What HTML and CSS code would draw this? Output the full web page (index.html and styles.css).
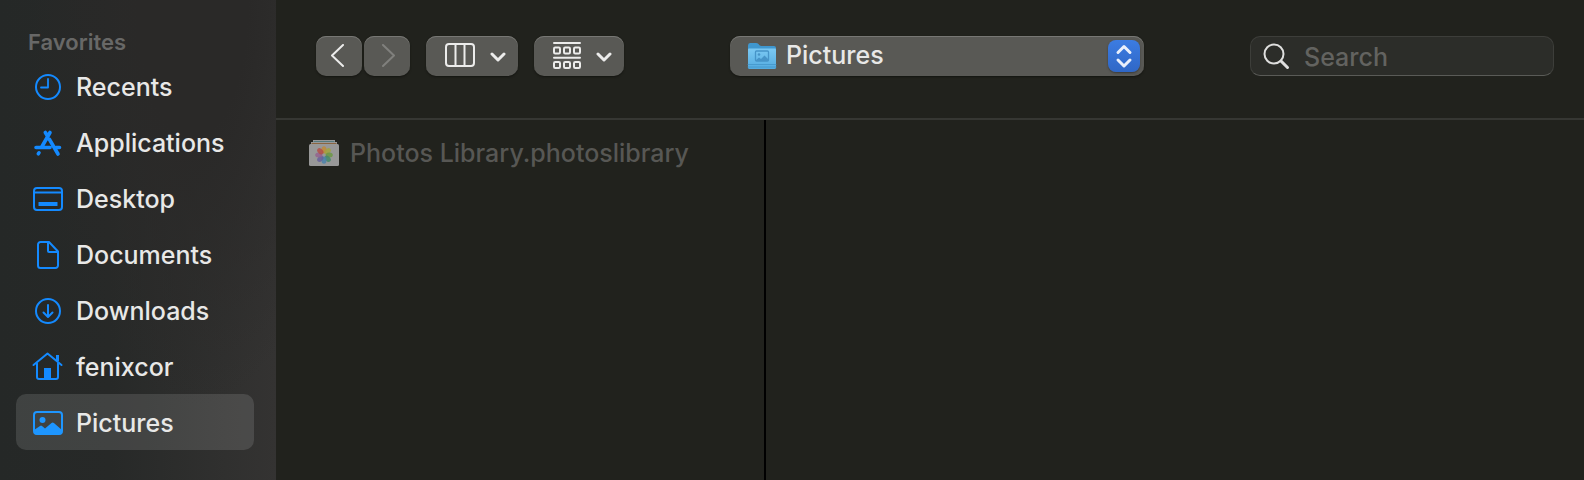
FILE: index.html
```html
<!DOCTYPE html>
<html lang="en">
<head>
<meta charset="utf-8">
<title>Pictures</title>
<link rel="stylesheet" href="styles.css">
</head>
<body>
<div class="dialog">
  <nav class="sidebar" aria-labelledby="favorites">
    <h2 class="sidebar-title" id="favorites">Favorites</h2>
    <ul class="places">
      <li><a class="place" href="#recents">
        <svg class="place-icon" viewBox="0 0 32 32"><circle cx="16" cy="16" r="12"/><path d="M16 8v8.500H9" stroke-width="1.800"/></svg>
        Recents</a></li>
      <li><a class="place" href="#applications">
        <svg class="place-icon" viewBox="0 0 32 32"><path d="M13.300 5.500l2.200 3.500M18 5.500L10 19.500M4 20.500h14M17.500 12.500L26 27M24 20.500h3.500M7 25.800l-.7 1" stroke-width="3.600"/></svg>
        Applications</a></li>
      <li><a class="place" href="#desktop">
        <svg class="place-icon" viewBox="0 0 32 32"><rect x="2" y="5" width="28" height="22" rx="3"/><path d="M2 9.500h28"/><rect class="solid" x="6.500" y="19" width="19" height="4" rx=".5"/></svg>
        Desktop</a></li>
      <li><a class="place" href="#documents">
        <svg class="place-icon" viewBox="0 0 32 32"><path d="M17 3H8.500A2.500 2.500 0 0 0 6 5.500v21A2.500 2.500 0 0 0 8.500 29h15a2.500 2.500 0 0 0 2.500-2.500V12.500z"/><path d="M16 3.500v8.500a1 1 0 0 0 1 1H26"/></svg>
        Documents</a></li>
      <li><a class="place" href="#downloads">
        <svg class="place-icon" viewBox="0 0 32 32"><circle cx="16" cy="16" r="12"/><path d="M16 10v11.500M11.500 17.500L16 22l4.500-4.500"/></svg>
        Downloads</a></li>
      <li><a class="place" href="#fenixcor">
        <svg class="place-icon" viewBox="0 0 32 32"><path d="M1.500 14L15.500 2.500l14 11.500"/><path d="M5 12.500V26a2 2 0 0 0 2 2h17a2 2 0 0 0 2-2V12.500"/><path d="M25.500 4v6" stroke-width="3" stroke-linecap="butt"/><path class="solid" d="M12 17h7v11h-7z"/></svg>
        fenixcor</a></li>
      <li><a class="place selected" href="#pictures" aria-current="page">
        <svg class="place-icon" viewBox="0 0 32 32"><rect x="2" y="5" width="28" height="22" rx="3"/><circle class="solid" cx="10.500" cy="13" r="3"/><path class="solid" d="M2 23l6-4q1-.8 2 0l3 2.500 6.500-5.500q1.200-1 2.400 0L30 23v2a2.500 2.500 0 0 1-2.500 2.500h-23A2.500 2.500 0 0 1 2 25z"/></svg>
        Pictures</a></li>
    </ul>
  </nav>
  <main class="content">
    <header class="toolbar">
      <div class="tools">
        <div class="history">
          <button class="tool step" type="button" aria-label="Back"><svg class="step-icon" viewBox="0 0 24 24"><path d="M16 1L5 11.500 16 22"/></svg></button>
          <button class="tool step" type="button" aria-label="Forward" disabled><svg class="step-icon" viewBox="0 0 24 24"><path d="M8 1l11 10.500L8 22"/></svg></button>
        </div>
        <button class="tool menu" type="button" aria-label="Column view">
          <svg class="menu-icon" viewBox="0 0 32 32"><rect x="2" y="4" width="28" height="22" rx="3"/><path d="M11.500 4v22M20.500 4v22"/></svg>
          <svg class="chevron" viewBox="0 0 16 16"><path d="M2 6l6 6 6-6"/></svg>
        </button>
        <button class="tool menu group" type="button" aria-label="Group items">
          <svg class="menu-icon" viewBox="0 0 32 32"><path d="M4 3h26M4 17.700h26"/><g stroke-width="2"><rect x="4" y="7.500" width="6" height="6" rx="1.200"/><rect x="14" y="7.500" width="6" height="6" rx="1.200"/><rect x="24" y="7.500" width="6" height="6" rx="1.200"/><rect x="4" y="22" width="6" height="6" rx="1.200"/><rect x="14" y="22" width="6" height="6" rx="1.200"/><rect x="24" y="22" width="6" height="6" rx="1.200"/></g></svg>
          <svg class="chevron" viewBox="0 0 16 16"><path d="M2 6l6 6 6-6"/></svg>
        </button>
      </div>
      <div class="location">
        <svg class="folder" viewBox="0 0 30 28">
          <defs><linearGradient id="front" x2="0" y2="1"><stop offset="0" stop-color="#7cc9f3"/><stop offset="1" stop-color="#53abe0"/></linearGradient></defs>
          <path d="M1 3.500Q1 1 3 1h6q1.500 0 2.500 1l1 1.200q.8.800 2 .8H27q2 0 2 2v6H1z" fill="#3f97cf"/>
          <path d="M1 7.500Q1 6.500 2 6.500h26q1 0 1 1V25.500Q29 27 27.500 27h-25Q1 27 1 25.500z" fill="url(#front)"/>
          <path d="M1 22.500h28M1 25h28" stroke="#4295c9" stroke-width=".8"/>
          <rect x="8.500" y="9" width="13" height="10" rx="1" fill="none" stroke="#4694c8" stroke-width="1.300"/>
          <circle cx="12" cy="12.500" r="1.300" fill="#4694c8"/>
          <path d="M9 18l3-2.500 2 1.500 3.500-3.500 4 4V19H9z" fill="#4694c8"/>
        </svg>
        <select class="location-select" aria-label="Location"><option>Pictures</option></select>
        <span class="stepper"><svg class="stepper-icon" viewBox="0 0 32 32"><path d="M10 12.500L16 6.500l6 6M10 20l6 6 6-6"/></svg></span>
      </div>
      <label class="search">
        <svg class="search-icon" viewBox="0 0 28 28"><circle cx="12" cy="12" r="9.500"/><path d="M19 19l6.500 6.500" stroke-width="3"/></svg>
        <input class="search-input" type="text" placeholder="Search" aria-label="Search">
      </label>
    </header>
    <div class="columns">
      <section class="column">
        <div class="file">
          <svg class="file-icon" viewBox="0 0 30 26">
            <path d="M4 0h22v2H4z" fill="#989898"/><path d="M5 1.500h20" stroke="#55797c" stroke-width="1"/>
            <path d="M2 2h26v2H2z" fill="#989898"/><path d="M3 3.500h24" stroke="#8a6540" stroke-width="1"/>
            <rect y="4" width="30" height="22" rx="1.500" fill="#989898"/>
            <g fill-opacity=".85"><ellipse cx="15" cy="9.800" rx="2.500" ry="3.600" fill="#c08a38"/><ellipse cx="15" cy="9.800" rx="2.500" ry="3.600" fill="#a3a33c" transform="rotate(45 15 15)"/><ellipse cx="15" cy="9.800" rx="2.500" ry="3.600" fill="#6b9844" transform="rotate(90 15 15)"/><ellipse cx="15" cy="9.800" rx="2.500" ry="3.600" fill="#448a68" transform="rotate(135 15 15)"/><ellipse cx="15" cy="9.800" rx="2.500" ry="3.600" fill="#4b83aa" transform="rotate(180 15 15)"/><ellipse cx="15" cy="9.800" rx="2.500" ry="3.600" fill="#66609a" transform="rotate(225 15 15)"/><ellipse cx="15" cy="9.800" rx="2.500" ry="3.600" fill="#94618e" transform="rotate(270 15 15)"/><ellipse cx="15" cy="9.800" rx="2.500" ry="3.600" fill="#b44e45" transform="rotate(315 15 15)"/></g>
          </svg>
          Photos Library.photoslibrary
        </div>
      </section>
      <section class="column preview"></section>
    </div>
  </main>
</div>
</body>
</html>
```
FILE: styles.css
```css
* { box-sizing: border-box; }

body {
  margin: 0;
  background: #21221d;
  color: #e8e8e7;
  font-family: Inter, "Liberation Sans", sans-serif;
  font-size: 25px;
  font-weight: 500;
  line-height: 32px;
}

svg {
  display: block;
  flex: none;
  fill: none;
  stroke-width: 2;
  stroke-linecap: round;
  stroke-linejoin: round;
}

.dialog { display: flex; min-height: 100vh; }

.sidebar {
  flex: none;
  width: 276px;
  padding: 28px 22px 28px 16px;
  background:
    radial-gradient(ellipse at 70% 0, #2a2928 20%, transparent 60%),
    linear-gradient(to right, #252827 0, #272928 40%, #343332 100%);
}

.sidebar-title {
  margin: 0;
  padding: 0 12px;
  color: #686867;
  font-size: 22px;
  font-weight: 600;
  line-height: 28px;
}

.places { margin: 0; padding: 2px 0 0; list-style: none; }

.place {
  display: flex;
  align-items: center;
  gap: 12px;
  height: 56px;
  padding: 2px 16px 0;
  border-radius: 10px;
  color: inherit;
  text-decoration: none;
}

.place.selected { background: rgba(255, 255, 255, 0.12); }
.place-icon { width: 32px; height: 32px; stroke: #148aff; }
.place-icon .solid { fill: #148aff; stroke: none; }
.selected .place-icon { stroke: #1e96ff; }
.selected .place-icon .solid { fill: #1e96ff; }

.content { display: flex; flex: 1; flex-direction: column; min-width: 0; }

.toolbar {
  display: flex;
  align-items: center;
  justify-content: space-between;
  gap: 16px;
  padding: 36px 30px 42px 40px;
  border-bottom: 2px solid #363733;
}

.tools { display: flex; gap: 16px; }
.history { display: flex; gap: 2px; }

.tool {
  display: flex;
  align-items: center;
  justify-content: center;
  height: 40px;
  padding: 0;
  border: 0;
  border-radius: 10px;
  background: #595955;
  box-shadow: inset 0 1px 0 #777774, 0 1px 2px #141511;
  stroke: #ececeb;
}

.step { width: 46px; }
.step:disabled { stroke: #80807d; }
.step-icon { width: 24px; height: 24px; }
.menu { gap: 14px; padding: 0 12px 0 18px; }
.menu.group { padding-left: 16px; }
.menu-icon { width: 32px; height: 32px; }
.chevron { width: 16px; height: 16px; stroke-width: 3; }

.location {
  display: flex;
  align-items: center;
  flex: 0 1 414px;
  position: relative;
  height: 40px;
  border-radius: 10px;
  background: #595955;
  box-shadow: inset 0 1px 0 #777774, 0 1px 2px #141511;
}

.folder {
  position: absolute;
  left: 17px;
  width: 30px;
  height: 28px;
  pointer-events: none;
}

.location-select {
  width: 100%;
  height: 40px;
  padding: 0 44px 2px 56px;
  appearance: none;
  border: 0;
  border-radius: 10px;
  background: transparent;
  color: inherit;
  font: inherit;
}

.stepper {
  position: absolute;
  right: 4px;
  border-radius: 8px;
  background: linear-gradient(#3c7ce2, #2f67c6);
  box-shadow: 0 1px 2px #3a3a38;
  pointer-events: none;
}

.stepper-icon { width: 32px; height: 32px; stroke: #e9effb; stroke-width: 3; }

.search {
  display: flex;
  align-items: center;
  flex: 0 1 304px;
  min-width: 0;
  gap: 14px;
  height: 40px;
  padding: 0 11px;
  border: 1px solid #3d3e3a;
  border-bottom-color: #5a5b57;
  border-radius: 10px;
  background: #2c2d29;
}

.search-icon { width: 28px; height: 28px; stroke: #dfdfde; }

.search-input {
  flex: 1;
  min-width: 0;
  padding: 2px 0 0;
  border: 0;
  outline: 0;
  background: transparent;
  color: inherit;
  font: inherit;
}

.search-input::placeholder { color: #636360; opacity: 1; }

.columns { display: flex; flex: 1; }
.column { flex: 0 0 490px; padding: 13px 32px; border-right: 2px solid #000; }
.column.preview { flex: 1; border: 0; }

.file {
  display: flex;
  align-items: center;
  gap: 10px;
  height: 40px;
  color: #575754;
}

.file-icon { width: 32px; height: 26px; }
```
